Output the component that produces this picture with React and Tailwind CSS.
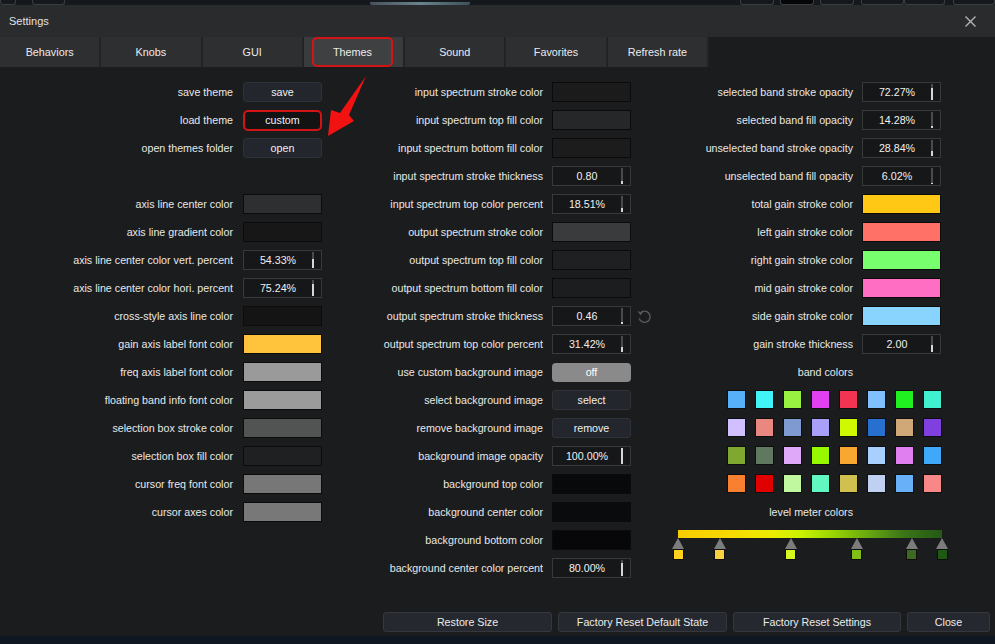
import React from "react";

const FONT = { fontFamily: '"Liberation Sans", Arial, sans-serif' };

function Label({ children, cls }) {
  return <div className={`${cls} text-right whitespace-nowrap text-[#e8e8e8]`}>{children}</div>;
}

function Btn({ children }) {
  return (
    <div className="w-[79px] h-[20px] rounded-[3px] bg-[#23262c] border border-[#2f3238] flex items-center justify-center text-[#f0f0f0]">
      {children}
    </div>
  );
}

function Swatch({ cls }) {
  return <div className={`w-[79px] h-[20px] border border-[#0b0b0b] ${cls}`} />;
}

function Slider({ value, frac }) {
  return (
    <div className="w-[79px] h-[20px] border border-[#38393a] bg-[#161718] flex items-center">
      <span className="flex-1 text-center text-[#f0f0f0]">{value}</span>
      <div className="w-[2px] h-[16px] bg-[#4b4b4d] flex flex-col justify-end mr-[7px]">
        <div className="w-full bg-[#d6d6d6]" style={{ height: `${frac}%` }} />
      </div>
    </div>
  );
}

function Toggle({ children }) {
  return (
    <div className="w-[79px] h-[19px] rounded-[4px] bg-[#8a8a8a] flex items-center justify-center text-white">
      {children}
    </div>
  );
}

function Custom() {
  return (
    <div className="w-[79px] h-[21px] rounded-[5px] border-2 border-[#d41414] bg-[#131314] flex items-center justify-center text-[#f0f0f0]">
      custom
    </div>
  );
}

function Undo() {
  return (
    <svg width="16" height="16" viewBox="0 0 16 16" className="absolute left-[84px] top-[2px]">
      <path d="M4.2 5.2 A5.6 5.6 0 1 1 3.2 10.5" fill="none" stroke="#5b5b5d" strokeWidth="1.4" />
      <path d="M2.2 3.4 L4.6 6.2 L6.4 3.6" fill="none" stroke="#5b5b5d" strokeWidth="1.3" />
    </svg>
  );
}

function render(item) {
  if (!item) return null;
  switch (item.t) {
    case "btn":
      return <Btn>{item.v}</Btn>;
    case "sw":
      return <Swatch cls={item.c} />;
    case "sl":
      return <Slider value={item.v} frac={item.f} />;
    case "tg":
      return <Toggle>{item.v}</Toggle>;
    case "custom":
      return <Custom />;
    default:
      return null;
  }
}

const col1 = [
  ["save theme", { t: "btn", v: "save" }],
  ["load theme", { t: "custom" }],
  ["open themes folder", { t: "btn", v: "open" }],
  ["", null],
  ["axis line center color", { t: "sw", c: "bg-[#2e2f30]" }],
  ["axis line gradient color", { t: "sw", c: "bg-[#171718]" }],
  ["axis line center color vert. percent", { t: "sl", v: "54.33%", f: 54 }],
  ["axis line center color hori. percent", { t: "sl", v: "75.24%", f: 75 }],
  ["cross-style axis line color", { t: "sw", c: "bg-[#141415]" }],
  ["gain axis label font color", { t: "sw", c: "bg-[#ffc33c]" }],
  ["freq axis label font color", { t: "sw", c: "bg-[#9a9a9a]" }],
  ["floating band info font color", { t: "sw", c: "bg-[#9b9b9b]" }],
  ["selection box stroke color", { t: "sw", c: "bg-[#525353]" }],
  ["selection box fill color", { t: "sw", c: "bg-[#1f2021]" }],
  ["cursor freq font color", { t: "sw", c: "bg-[#777777]" }],
  ["cursor axes color", { t: "sw", c: "bg-[#787878]" }],
];

const col2 = [
  ["input spectrum stroke color", { t: "sw", c: "bg-[#1b1b1c]" }],
  ["input spectrum top fill color", { t: "sw", c: "bg-[#262728]" }],
  ["input spectrum bottom fill color", { t: "sw", c: "bg-[#1c1c1d]" }],
  ["input spectrum stroke thickness", { t: "sl", v: "0.80", f: 18 }],
  ["input spectrum top color percent", { t: "sl", v: "18.51%", f: 22 }],
  ["output spectrum stroke color", { t: "sw", c: "bg-[#3a3b3c]" }],
  ["output spectrum top fill color", { t: "sw", c: "bg-[#1f2021]" }],
  ["output spectrum bottom fill color", { t: "sw", c: "bg-[#1c1d1e]" }],
  ["output spectrum stroke thickness", { t: "sl", v: "0.46", f: 12 }, true],
  ["output spectrum top color percent", { t: "sl", v: "31.42%", f: 32 }],
  ["use custom background image", { t: "tg", v: "off" }],
  ["select background image", { t: "btn", v: "select" }],
  ["remove background image", { t: "btn", v: "remove" }],
  ["background image opacity", { t: "sl", v: "100.00%", f: 100 }],
  ["background top color", { t: "sw", c: "bg-[#08090a]" }],
  ["background center color", { t: "sw", c: "bg-[#0a0b0d]" }],
  ["background bottom color", { t: "sw", c: "bg-[#07070a]" }],
  ["background center color percent", { t: "sl", v: "80.00%", f: 80 }],
];

const col3 = [
  ["selected band stroke opacity", { t: "sl", v: "72.27%", f: 72 }],
  ["selected band fill opacity", { t: "sl", v: "14.28%", f: 14 }],
  ["unselected band stroke opacity", { t: "sl", v: "28.84%", f: 29 }],
  ["unselected band fill opacity", { t: "sl", v: "6.02%", f: 6 }],
  ["total gain stroke color", { t: "sw", c: "bg-[#ffc814]" }],
  ["left gain stroke color", { t: "sw", c: "bg-[#ff7066]" }],
  ["right gain stroke color", { t: "sw", c: "bg-[#77ff6e]" }],
  ["mid gain stroke color", { t: "sw", c: "bg-[#ff6ec2]" }],
  ["side gain stroke color", { t: "sw", c: "bg-[#88d4ff]" }],
  ["gain stroke thickness", { t: "sl", v: "2.00", f: 45 }],
  ["band colors", null],
];

const bandColors = [
  "bg-[#58b0f8]", "bg-[#40f4f8]", "bg-[#98f040]", "bg-[#e040f0]", "bg-[#f03452]", "bg-[#80c0ff]", "bg-[#20f020]", "bg-[#40f0d0]",
  "bg-[#d0c0ff]", "bg-[#e88880]", "bg-[#7f9ad0]", "bg-[#a8a0f8]", "bg-[#d0f800]", "bg-[#2870d0]", "bg-[#d0a878]", "bg-[#8040e0]",
  "bg-[#80a830]", "bg-[#607860]", "bg-[#e0a8f8]", "bg-[#98f800]", "bg-[#f8a830]", "bg-[#a8d0ff]", "bg-[#e080f0]", "bg-[#40a8f8]",
  "bg-[#f88030]", "bg-[#e00000]", "bg-[#c0f8a0]", "bg-[#60f8c0]", "bg-[#d0c050]", "bg-[#c0d0f0]", "bg-[#68b0f8]", "bg-[#f88888]",
];

const markers = [
  { p: 0, c: "bg-[#ffd21e]" },
  { p: 15.9, c: "bg-[#f8d040]" },
  { p: 42.8, c: "bg-[#d4f820]" },
  { p: 67.8, c: "bg-[#80c018]" },
  { p: 88.6, c: "bg-[#3c6a20]" },
  { p: 100, c: "bg-[#1f5a14]" },
];

const tabs = ["Behaviors", "Knobs", "GUI", "Themes", "Sound", "Favorites", "Refresh rate"];

export default function App() {
  return (
    <div
      className="w-[995px] h-[644px] bg-[#1b1c1d] flex flex-col overflow-hidden relative text-[10.7px] leading-none"
      style={FONT}
    >
      {/* app behind strip */}
      <div className="h-[5px] bg-[#15181c] flex items-end relative">
        <div className="ml-[0px] w-[17px] h-[5px] border border-t-0 border-[#3a3d42] rounded-b-[3px]" />
        <div className="ml-[16px] w-[34px] h-[5px] border border-t-0 border-[#3a3d42] rounded-b-[3px]" />
        <div className="ml-[305px] w-[105px] h-[3px] bg-gradient-to-r from-[#5b6b76] via-[#8fb2bf] to-[#4e6a72] rounded-b-[2px] opacity-70" />
        <div className="ml-[270px] w-[35px] h-[5px] border border-t-0 border-[#3a3d42] rounded-b-[3px]" />
        <div className="ml-[6px] w-[36px] h-[5px] bg-[#050607] border border-t-0 border-[#3a3d42] rounded-b-[3px]" />
        <div className="ml-[6px] w-[35px] h-[5px] border border-t-0 border-[#3a3d42] rounded-b-[3px]" />
        <div className="ml-[7px] w-[45px] h-[5px] border border-t-0 border-[#3a3d42] rounded-b-[3px]" />
        <div className="w-[43px] h-[5px] border border-t-0 border-[#3a3d42] rounded-b-[3px]" />
        <div className="ml-[8px] w-[44px] h-[5px] border border-t-0 border-[#3a3d42] rounded-b-[3px]" />
      </div>

      {/* title bar */}
      <div className="h-[32px] bg-[#2a2b2d] flex items-center justify-between pl-[9px] pr-[19px]">
        <span className="text-[#e2e2e2] text-[11px]">Settings</span>
        <svg width="11" height="11" viewBox="0 0 11 11">
          <path d="M0.5 0.5 L10.5 10.5 M10.5 0.5 L0.5 10.5" stroke="#b4b4b4" strokeWidth="1.4" />
        </svg>
      </div>

      {/* tabs */}
      <div className="h-[30px] flex">
        <div className="w-[709px] grid grid-cols-7">
          {tabs.map((t) => (
            <div
              key={t}
              className={`flex items-center justify-center text-[#ececec] text-[10.8px] border-r-2 border-[#222324] ${
                t === "Themes" ? "bg-[#3a3b3d] relative" : "bg-[#2e2f31]"
              }`}
            >
              {t === "Themes" ? (
                <div className="absolute left-[8px] right-[10px] top-0 bottom-0 rounded-[5px] border-2 border-[#d41414] flex items-center justify-center bg-[#3f4042]">
                  {t}
                </div>
              ) : (
                t
              )}
            </div>
          ))}
        </div>
      </div>

      {/* content */}
      <div className="flex pt-[11px] relative">
        {/* col1 */}
        <div className="w-[322px] flex flex-col">
          {col1.map(([l, c], i) => (
            <div key={i} className="h-[28px] flex items-center">
              <Label cls="w-[233px]">{l}</Label>
              <div className="ml-[10px]">{render(c)}</div>
            </div>
          ))}
        </div>
        {/* col2 */}
        <div className="w-[310px] flex flex-col">
          {col2.map(([l, c, undo], i) => (
            <div key={i} className="h-[28px] flex items-center">
              <Label cls="w-[221px]">{l}</Label>
              <div className="ml-[9px] relative">
                {render(c)}
                {undo ? <Undo /> : null}
              </div>
            </div>
          ))}
        </div>
        {/* col3 */}
        <div className="w-[310px] flex flex-col">
          {col3.map(([l, c], i) => (
            <div key={i} className="h-[28px] flex items-center">
              <Label cls="w-[221px]">{l}</Label>
              {c ? <div className="ml-[9px]">{render(c)}</div> : null}
            </div>
          ))}
          <div className="flex justify-end">
            <div className="grid grid-cols-8 gap-x-[9px] gap-y-[9px] pt-[4px] pb-[5px]">
              {bandColors.map((c, i) => (
                <div key={i} className={`w-[19px] h-[19px] border border-[#0e0e0e] ${c}`} />
              ))}
            </div>
          </div>
          <div className="h-[28px] flex items-center">
            <Label cls="w-[221px]">level meter colors</Label>
          </div>
          <div className="pl-[46px] pt-[4px]">
            <div className="w-[264px] relative">
              <div className="h-[8px] bg-[linear-gradient(to_right,#f8cc00_0%,#f8da00_20%,#ecec00_35%,#ccf200_46%,#9cd800_58%,#68a810_72%,#3a7418_86%,#245a14_100%)]" />
              <div className="h-[24px] relative">
                {markers.map((m, i) => (
                  <div
                    key={i}
                    className="absolute top-0 -translate-x-1/2 flex flex-col items-center"
                    style={{ left: `${m.p}%` }}
                  >
                    <div className="w-0 h-0 border-l-[6px] border-r-[6px] border-b-[11px] border-l-transparent border-r-transparent border-b-[#7c7c7c]" />
                    <div className={`w-[11px] h-[11px] border border-[#0e0e0e] ${m.c}`} />
                  </div>
                ))}
              </div>
            </div>
          </div>
        </div>

        {/* red arrow annotation */}
        <svg
          className="absolute left-0 top-0 pointer-events-none"
          width="995"
          height="200"
          viewBox="0 67 995 200"
        >
          <polygon points="366,76 349,115 354,121 328,136 331,110 340,113" fill="#f21212" />
        </svg>
      </div>

      {/* bottom buttons */}
      <div className="mt-auto flex justify-end gap-[6px] pr-[5px] pb-[4px]">
        {[
          ["Restore Size", "w-[169px]"],
          ["Factory Reset Default State", "w-[169px]"],
          ["Factory Reset Settings", "w-[168px]"],
          ["Close", "w-[83px]"],
        ].map(([t, w]) => (
          <div
            key={t}
            className={`${w} h-[20px] rounded-[3px] bg-[#25282e] border border-[#34373d] flex items-center justify-center text-[#ececec]`}
          >
            {t}
          </div>
        ))}
      </div>
      <div className="h-[8px] bg-[#0f1722]" />
    </div>
  );
}
